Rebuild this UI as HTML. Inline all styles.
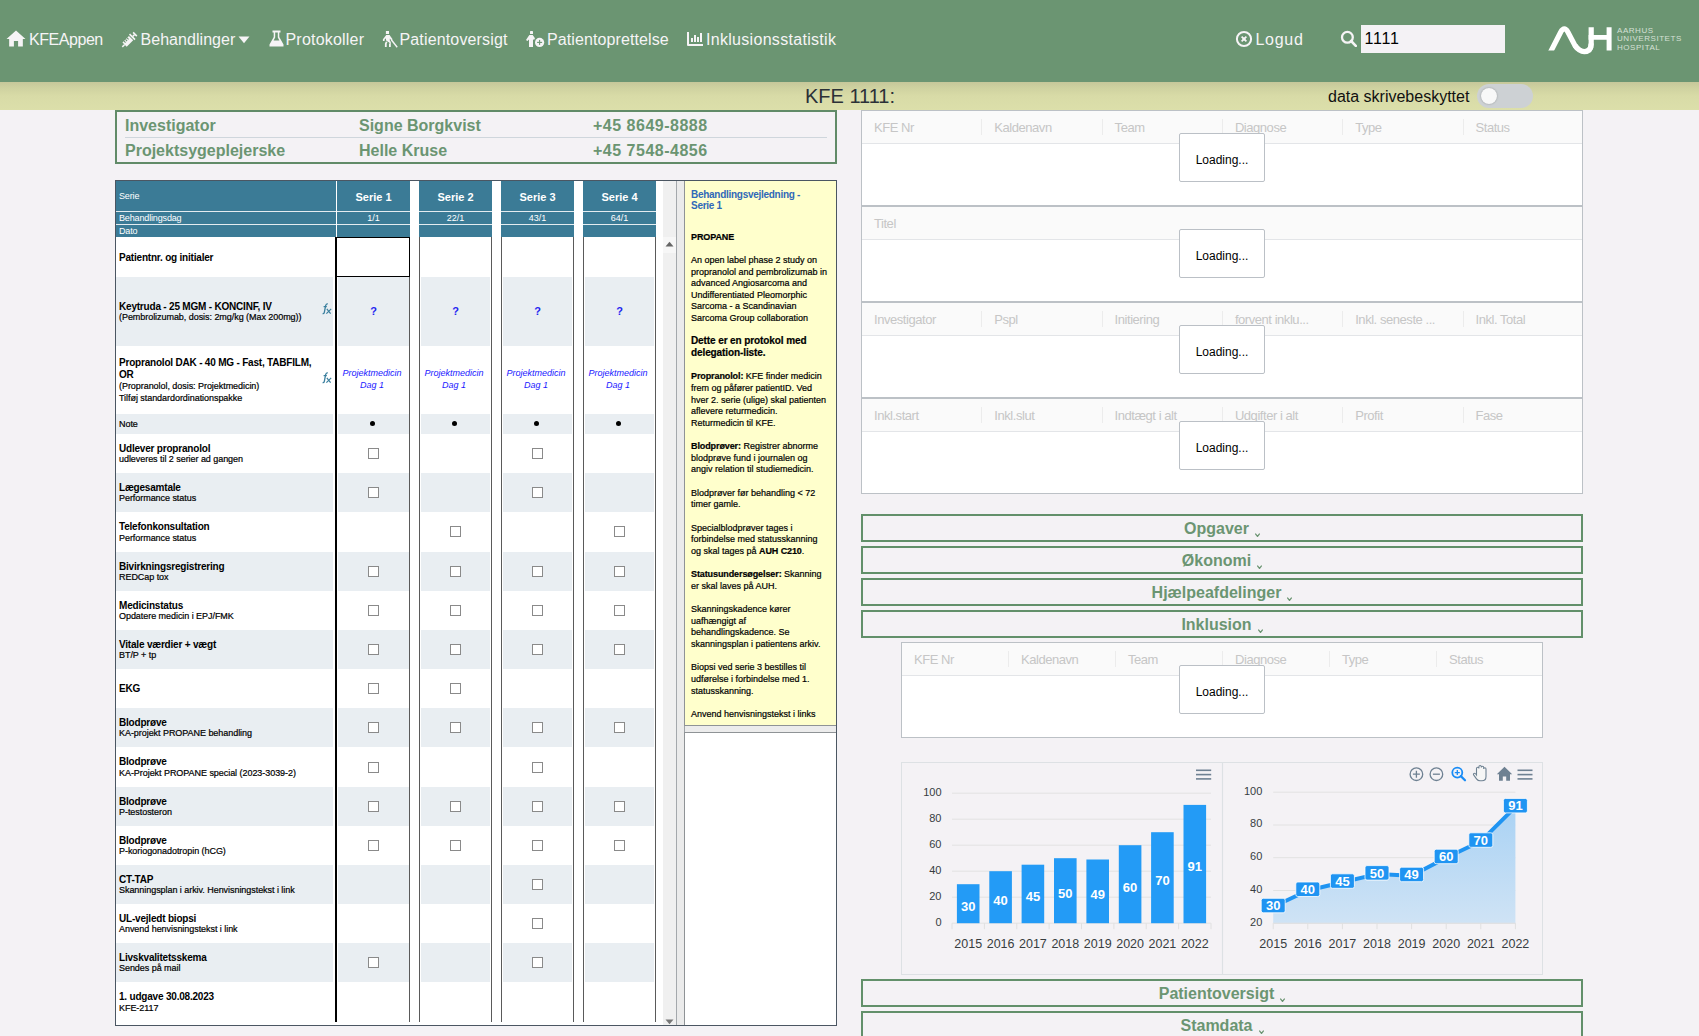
<!DOCTYPE html>
<html><head><meta charset="utf-8">
<style>
*{box-sizing:border-box;}
html,body{margin:0;padding:0;}
body{width:1699px;height:1036px;overflow:hidden;background:#f4f2f5;position:relative;font-family:"Liberation Sans",sans-serif;}
.a{position:absolute;}
.nt{position:absolute;top:30px;font-size:16px;line-height:20px;color:#f6f4f6;white-space:nowrap;}
.ico{position:absolute;fill:#f6f4f6;}
#nav{position:absolute;left:0;top:0;width:1699px;height:82px;background:#6b9572;}
#band{position:absolute;left:0;top:82px;width:1699px;height:28px;background:linear-gradient(#c6c79a 0px,#cfd2a0 6px,#d8dba7 14px,#dcdfaa 28px);}
.inf{position:absolute;font-size:16px;font-weight:bold;color:#6b9572;white-space:nowrap;line-height:20px;}
.hl{position:absolute;font-size:9px;line-height:11px;color:#fff;white-space:nowrap;letter-spacing:-0.15px;}
.hs{position:absolute;width:73px;text-align:center;font-size:11px;font-weight:bold;line-height:14px;color:#fff;white-space:nowrap;}
.hd{position:absolute;width:73px;text-align:center;font-size:9px;line-height:11px;color:#fff;white-space:nowrap;}
.sh{background:#e9eef2;}
.lab{position:absolute;left:119px;width:200px;display:flex;align-items:center;padding-top:1.6px;}
.lt{font-size:10px;font-weight:bold;line-height:11.7px;color:#000;white-space:nowrap;letter-spacing:-0.2px;}
.ls{font-size:9px;line-height:11.7px;color:#000;white-space:nowrap;letter-spacing:-0.05px;-webkit-text-stroke:0.2px #000;}
.cb{position:absolute;width:11px;height:11px;border:1px solid #8a8a8a;background:#fff;}
.vl{top:237px;width:1px;height:785px;background:#5a5a5a;}
.q{position:absolute;width:73px;text-align:center;font-size:11px;font-weight:bold;color:#2424f0;}
.pm{position:absolute;width:70px;display:flex;align-items:center;justify-content:center;text-align:center;font-size:9px;font-style:italic;line-height:11.6px;color:#1a1aff;white-space:nowrap;}
.yt{position:absolute;font-size:10px;font-weight:bold;line-height:11.5px;color:#2f68b8;white-space:nowrap;letter-spacing:-0.28px;}
.yb{position:absolute;font-size:9px;line-height:11.64px;color:#000;white-space:nowrap;-webkit-text-stroke:0.2px #000;}
.yb b{font-size:9px;letter-spacing:-0.1px;}
.yb b.big{font-size:10px;line-height:10px;letter-spacing:-0.1px;}
.gh{position:absolute;font-size:13px;line-height:16px;color:#c6c6c6;white-space:nowrap;letter-spacing:-0.45px;}
.ld{position:absolute;left:1179px;width:86px;height:49px;border:1px solid #bbc0c6;border-radius:2px;background:#fff;font-size:12px;line-height:52px;text-align:center;color:#000;}
.acc{position:absolute;left:861px;width:722px;height:28px;border:2px solid #62906a;text-align:center;color:#6b9572;font-size:16px;font-weight:bold;line-height:26px;white-space:nowrap;}
.acc svg{margin-left:6px;vertical-align:-3px;}
.cy{font-size:11px;fill:#373d3f;font-family:"Liberation Sans",sans-serif;}
.cx{font-size:12.5px;fill:#373d3f;font-family:"Liberation Sans",sans-serif;}
.dl{font-size:13px;font-weight:bold;fill:#fff;font-family:"Liberation Sans",sans-serif;}
</style></head><body>
<div id="nav">
  <!-- home -->
  <svg class="ico" style="left:6px;top:30px" width="20" height="17" viewBox="0 0 19 17" preserveAspectRatio="none"><path d="M9.5 0.5 L18.5 9 L16 9 L16 16.5 L11.5 16.5 L11.5 11 L7.5 11 L7.5 16.5 L3 16.5 L3 9 L0.5 9 Z"/></svg>
  <span class="nt" style="left:29px;letter-spacing:-0.45px">KFEAppen</span>
  <!-- syringe -->
  <svg class="ico" style="left:115px;top:25px" width="30" height="27" viewBox="0 0 30 27"><g transform="translate(7.3,21.9) rotate(45)"><rect x="-0.75" y="-3.4" width="1.5" height="3.4"/><rect x="-3" y="-12.4" width="6" height="9.2"/><rect x="-3.9" y="-14.9" width="7.8" height="1.6"/><rect x="-0.8" y="-17.2" width="1.6" height="2.5"/><rect x="-2.6" y="-18.7" width="5.2" height="1.6"/><rect x="-3.1" y="-10.3" width="2.3" height="1.1" fill="#6b9572"/><rect x="-3.1" y="-8.1" width="2.3" height="1.1" fill="#6b9572"/><rect x="-3.1" y="-5.9" width="2.3" height="1.1" fill="#6b9572"/></g></svg>
  <span class="nt" style="left:140.5px;letter-spacing:0.05px">Behandlinger</span>
  <svg class="ico" style="left:238px;top:36px" width="12" height="8" viewBox="0 0 12 8"><path d="M0.5 0.5 L11.5 0.5 L6 7.2 Z"/></svg>
  <!-- flask -->
  <svg class="ico" style="left:269px;top:30px" width="15" height="17" viewBox="0 0 15 17"><path d="M3.5 0.5 L11.5 0.5 L11.5 2.5 L10.3 2.5 L10.3 7 L14.5 14.5 L14.5 16.5 L0.5 16.5 L0.5 14.5 L4.7 7 L4.7 2.5 L3.5 2.5 Z M6.2 2.5 L6.2 7.5 L4.6 10.5 L10.4 10.5 L8.8 7.5 L8.8 2.5 Z"/></svg>
  <span class="nt" style="left:285.5px;letter-spacing:0.2px">Protokoller</span>
  <!-- person cane -->
  <svg class="ico" style="left:378px;top:27px" width="24" height="23" viewBox="0 0 24 23"><rect x="7.9" y="4" width="3.1" height="3"/><path d="M8.2 8 L11.6 8 L12.6 9.4 L14.6 12.3 L13.4 13.6 L11.8 11.5 L11.8 13.6 L12.8 15 L12.8 20 L11 20 L11 16.2 L9.6 14.9 L8.7 16.7 L8.7 20 L6.9 20 L6.9 16.6 L8 14.2 L8 11.2 L6.6 12.6 L6.6 14 L4.9 14 L4.9 12.2 L6.3 10.6 Z"/><path d="M13.3 12.8 L19.2 20.3" stroke="#f6f4f6" stroke-width="1.4"/><path d="M7.6 13.6 L11.6 16.3" stroke="#6b9572" stroke-width="0.9"/></svg>
  <span class="nt" style="left:399.5px;letter-spacing:0.15px">Patientoversigt</span>
  <!-- person plus -->
  <svg class="ico" style="left:522px;top:27px" width="28" height="23" viewBox="0 0 28 23"><rect x="8" y="4" width="3" height="3" rx="0.6"/><path d="M7.4 8 L10.7 8 L12.8 11 L12.8 12.2 L11 12.8 L11 20 L7 20 L7 12.6 L5.4 14 L4 13 L5.8 10.2 Z"/><circle cx="17.6" cy="15.4" r="5.4" fill="#6b9572"/><circle cx="17.6" cy="15.4" r="4.6"/><rect x="15.1" y="14.85" width="5" height="1.1" fill="#6b9572"/><rect x="17.05" y="12.9" width="1.1" height="5" fill="#6b9572"/></svg>
  <span class="nt" style="left:547px;letter-spacing:0.1px">Patientoprettelse</span>
  <!-- chart -->
  <svg class="ico" style="left:683px;top:28px" width="25" height="22" viewBox="0 0 25 22"><rect x="4" y="4" width="2" height="13.5"/><rect x="4.5" y="16" width="15.5" height="2"/><rect x="8" y="10" width="2" height="4"/><rect x="11" y="7" width="2" height="7"/><rect x="14" y="9" width="2" height="5"/><rect x="17" y="5" width="2" height="9"/></svg>
  <span class="nt" style="left:706px;letter-spacing:0.3px">Inklusionsstatistik</span>
  <!-- logud -->
  <svg class="ico" style="left:1235px;top:30px" width="18" height="18" viewBox="0 0 18 18"><circle cx="9" cy="9" r="7.1" fill="none" stroke="#f6f4f6" stroke-width="2"/><path d="M6 7.2 L7.2 6 L9 7.8 L10.8 6 L12 7.2 L10.2 9 L12 10.8 L10.8 12 L9 10.2 L7.2 12 L6 10.8 L7.8 9 Z"/><rect x="7.6" y="7.6" width="2.8" height="2.8"/></svg>
  <span class="nt" style="left:1255.5px;letter-spacing:0.7px">Logud</span>
  <!-- search -->
  <svg class="ico" style="left:1340px;top:30px" width="17" height="17" viewBox="0 0 17 17"><circle cx="7.4" cy="7.3" r="5.4" fill="none" stroke="#f6f4f6" stroke-width="2.3"/><path d="M11.1 11 L15.8 15.8" stroke="#f6f4f6" stroke-width="2.6" stroke-linecap="round"/></svg>
  <div class="a" style="left:1361px;top:25px;width:144px;height:28px;background:#f4f2f5;"></div>
  <span class="a" style="left:1364.5px;top:29px;font-size:16px;line-height:20px;color:#000;letter-spacing:0.75px;">1111</span>
  <!-- logo -->
  <svg class="a" style="left:1540px;top:15px" width="80" height="45" viewBox="0 0 80 45"><defs><clipPath id="lc"><rect x="0" y="0" width="80" height="35.6"/></clipPath></defs><path clip-path="url(#lc)" d="M9.5 39 L20.6 17.2 Q24.3 10.6 28 17.2 L34.8 30.2 Q39.2 36.6 44.2 36.6 Q51.2 36.6 51.2 28.5 L51.2 12.2" fill="none" stroke="#ffffff" stroke-width="5.2"/><path d="M34.8 30.2 Q39.2 36.6 44.2 36.6 Q51.2 36.6 51.2 28.5" fill="none" stroke="#ffffff" stroke-width="5.2"/><path d="M48.6 20.1 L67 20.1 L67 24.8 L48.6 24.8 Z M66.6 12.2 L71.6 12.2 L71.6 35.5 L66.6 35.5 Z" fill="#ffffff"/></svg>
  <div class="a" style="left:1617px;top:26.5px;font-size:8px;line-height:8.85px;color:#d6e0d6;letter-spacing:0.55px;white-space:nowrap;">AARHUS<br>UNIVERSITETS<br>HOSPITAL</div>
</div>
<div id="band">
  <span class="a" style="left:805px;top:2.5px;font-size:20px;line-height:22px;color:#2b3037;">KFE 1111:</span>
  <span class="a" style="left:1328px;top:5px;font-size:16px;line-height:20px;color:#111;">data skrivebeskyttet</span>
  <div class="a" style="left:1477px;top:2px;width:56px;height:24px;border-radius:12px;background:#cdd1d4;"></div>
  <div class="a" style="left:1481px;top:6px;width:16px;height:16px;border-radius:8px;background:#f8f8f8;box-shadow:0 0 2px rgba(0,0,0,.3);"></div>
</div>
<!-- info box -->
<div class="a" style="left:115px;top:110px;width:722px;height:54px;border:2px solid #618b68;background:#f4f2f5;">
  <div class="a" style="left:8px;top:25px;width:702px;height:1px;background:#cfd6dc;"></div>
  <span class="inf" style="left:8px;top:4px">Investigator</span>
  <span class="inf" style="left:242px;top:4px">Signe Borgkvist</span>
  <span class="inf" style="left:476px;top:4px;letter-spacing:0.5px">+45 8649-8888</span>
  <span class="inf" style="left:8px;top:29px">Projektsygeplejerske</span>
  <span class="inf" style="left:242px;top:29px">Helle Kruse</span>
  <span class="inf" style="left:476px;top:29px;letter-spacing:0.5px">+45 7548-4856</span>
</div>
<div class="a" style="left:115px;top:180px;width:722px;height:846px;border:1px solid #4b5662;background:#fff;"></div>
<div class="a" style="left:116px;top:181px;width:220px;height:56px;background:#3b7b96;"></div>
<div class="a" style="left:337px;top:181px;width:73px;height:56px;background:#3b7b96;"></div>
<div class="a" style="left:419px;top:181px;width:73px;height:56px;background:#3b7b96;"></div>
<div class="a" style="left:501px;top:181px;width:73px;height:56px;background:#3b7b96;"></div>
<div class="a" style="left:583px;top:181px;width:73px;height:56px;background:#3b7b96;"></div>
<div class="a" style="left:116px;top:211px;width:220px;height:1px;background:#e4ecf0;"></div>
<div class="a" style="left:337px;top:211px;width:73px;height:1px;background:#e4ecf0;"></div>
<div class="a" style="left:419px;top:211px;width:73px;height:1px;background:#e4ecf0;"></div>
<div class="a" style="left:501px;top:211px;width:73px;height:1px;background:#e4ecf0;"></div>
<div class="a" style="left:583px;top:211px;width:73px;height:1px;background:#e4ecf0;"></div>
<div class="a" style="left:116px;top:224px;width:220px;height:1px;background:#e4ecf0;"></div>
<div class="a" style="left:337px;top:224px;width:73px;height:1px;background:#e4ecf0;"></div>
<div class="a" style="left:419px;top:224px;width:73px;height:1px;background:#e4ecf0;"></div>
<div class="a" style="left:501px;top:224px;width:73px;height:1px;background:#e4ecf0;"></div>
<div class="a" style="left:583px;top:224px;width:73px;height:1px;background:#e4ecf0;"></div>
<span class="hl" style="left:119px;top:191px">Serie</span>
<span class="hl" style="left:119px;top:213px">Behandlingsdag</span>
<span class="hl" style="left:119px;top:226px">Dato</span>
<span class="hs" style="left:337px;top:190px">Serie 1</span>
<span class="hd" style="left:337px;top:213px">1/1</span>
<span class="hs" style="left:419px;top:190px">Serie 2</span>
<span class="hd" style="left:419px;top:213px">22/1</span>
<span class="hs" style="left:501px;top:190px">Serie 3</span>
<span class="hd" style="left:501px;top:213px">43/1</span>
<span class="hs" style="left:583px;top:190px">Serie 4</span>
<span class="hd" style="left:583px;top:213px">64/1</span>
<div class="lab" style="top:237px;height:40px"><div><div class="lt">Patientnr. og initialer</div></div></div>
<div class="a sh" style="left:116px;top:277px;width:217px;height:69px"></div>
<div class="a sh" style="left:338px;top:277px;width:71px;height:69px"></div>
<div class="a sh" style="left:421px;top:277px;width:69px;height:69px"></div>
<div class="a sh" style="left:503px;top:277px;width:69px;height:69px"></div>
<div class="a sh" style="left:585px;top:277px;width:69px;height:69px"></div>
<div class="lab" style="top:277px;height:69px"><div><div class="lt">Keytruda - 25 MGM - KONCINF, IV</div><div class="ls">(Pembrolizumab, dosis: 2mg/kg (Max 200mg))</div></div></div>
<span class="q" style="left:337px;top:277px;height:69px;line-height:69px">?</span>
<span class="q" style="left:419px;top:277px;height:69px;line-height:69px">?</span>
<span class="q" style="left:501px;top:277px;height:69px;line-height:69px">?</span>
<span class="q" style="left:583px;top:277px;height:69px;line-height:69px">?</span>
<svg class="a fx" style="left:322px;top:303px" width="10" height="12" viewBox="0 0 10 12"><path d="M5.8 0.9 Q4.3 0.6 3.6 2.6 L2.4 9.2 Q1.9 10.9 0.6 10.6" fill="none" stroke="#3a7f9e" stroke-width="1.3"/><path d="M1.6 3.6 L4.8 3.6" stroke="#3a7f9e" stroke-width="1.2"/><path d="M4.8 5.9 L8.6 10.6 M9.2 5.9 L4.4 10.6" stroke="#3a7f9e" stroke-width="1.2"/></svg>
<div class="lab" style="top:346px;height:68px"><div><div class="lt">Propranolol DAK - 40 MG - Fast, TABFILM,<br>OR</div><div class="ls">(Propranolol, dosis: Projektmedicin)</div><div class="ls">Tilføj standardordinationspakke</div></div></div>
<div class="pm" style="left:337px;top:346px;height:68px"><div>Projektmedicin<br>Dag 1</div></div>
<div class="pm" style="left:419px;top:346px;height:68px"><div>Projektmedicin<br>Dag 1</div></div>
<div class="pm" style="left:501px;top:346px;height:68px"><div>Projektmedicin<br>Dag 1</div></div>
<div class="pm" style="left:583px;top:346px;height:68px"><div>Projektmedicin<br>Dag 1</div></div>
<svg class="a fx" style="left:322px;top:372px" width="10" height="12" viewBox="0 0 10 12"><path d="M5.8 0.9 Q4.3 0.6 3.6 2.6 L2.4 9.2 Q1.9 10.9 0.6 10.6" fill="none" stroke="#3a7f9e" stroke-width="1.3"/><path d="M1.6 3.6 L4.8 3.6" stroke="#3a7f9e" stroke-width="1.2"/><path d="M4.8 5.9 L8.6 10.6 M9.2 5.9 L4.4 10.6" stroke="#3a7f9e" stroke-width="1.2"/></svg>
<div class="a sh" style="left:116px;top:414px;width:217px;height:20px"></div>
<div class="a sh" style="left:338px;top:414px;width:71px;height:20px"></div>
<div class="a sh" style="left:421px;top:414px;width:69px;height:20px"></div>
<div class="a sh" style="left:503px;top:414px;width:69px;height:20px"></div>
<div class="a sh" style="left:585px;top:414px;width:69px;height:20px"></div>
<div class="lab" style="top:414px;height:20px"><div><div class="ls">Note</div></div></div>
<div class="a" style="left:370px;top:421px;width:5px;height:5px;border-radius:3px;background:#000"></div>
<div class="a" style="left:452px;top:421px;width:5px;height:5px;border-radius:3px;background:#000"></div>
<div class="a" style="left:534px;top:421px;width:5px;height:5px;border-radius:3px;background:#000"></div>
<div class="a" style="left:616px;top:421px;width:5px;height:5px;border-radius:3px;background:#000"></div>
<div class="lab" style="top:434px;height:39px"><div><div class="lt">Udlever propranolol</div><div class="ls">udleveres til 2 serier ad gangen</div></div></div>
<div class="cb" style="left:368px;top:448px"></div>
<div class="cb" style="left:532px;top:448px"></div>
<div class="a sh" style="left:116px;top:473px;width:217px;height:39px"></div>
<div class="a sh" style="left:338px;top:473px;width:71px;height:39px"></div>
<div class="a sh" style="left:421px;top:473px;width:69px;height:39px"></div>
<div class="a sh" style="left:503px;top:473px;width:69px;height:39px"></div>
<div class="a sh" style="left:585px;top:473px;width:69px;height:39px"></div>
<div class="lab" style="top:473px;height:39px"><div><div class="lt">Lægesamtale</div><div class="ls">Performance status</div></div></div>
<div class="cb" style="left:368px;top:487px"></div>
<div class="cb" style="left:532px;top:487px"></div>
<div class="lab" style="top:512px;height:40px"><div><div class="lt">Telefonkonsultation</div><div class="ls">Performance status</div></div></div>
<div class="cb" style="left:450px;top:526px"></div>
<div class="cb" style="left:614px;top:526px"></div>
<div class="a sh" style="left:116px;top:552px;width:217px;height:39px"></div>
<div class="a sh" style="left:338px;top:552px;width:71px;height:39px"></div>
<div class="a sh" style="left:421px;top:552px;width:69px;height:39px"></div>
<div class="a sh" style="left:503px;top:552px;width:69px;height:39px"></div>
<div class="a sh" style="left:585px;top:552px;width:69px;height:39px"></div>
<div class="lab" style="top:552px;height:39px"><div><div class="lt">Bivirkningsregistrering</div><div class="ls">REDCap tox</div></div></div>
<div class="cb" style="left:368px;top:566px"></div>
<div class="cb" style="left:450px;top:566px"></div>
<div class="cb" style="left:532px;top:566px"></div>
<div class="cb" style="left:614px;top:566px"></div>
<div class="lab" style="top:591px;height:39px"><div><div class="lt">Medicinstatus</div><div class="ls">Opdatere medicin i EPJ/FMK</div></div></div>
<div class="cb" style="left:368px;top:605px"></div>
<div class="cb" style="left:450px;top:605px"></div>
<div class="cb" style="left:532px;top:605px"></div>
<div class="cb" style="left:614px;top:605px"></div>
<div class="a sh" style="left:116px;top:630px;width:217px;height:39px"></div>
<div class="a sh" style="left:338px;top:630px;width:71px;height:39px"></div>
<div class="a sh" style="left:421px;top:630px;width:69px;height:39px"></div>
<div class="a sh" style="left:503px;top:630px;width:69px;height:39px"></div>
<div class="a sh" style="left:585px;top:630px;width:69px;height:39px"></div>
<div class="lab" style="top:630px;height:39px"><div><div class="lt">Vitale værdier + vægt</div><div class="ls">BT/P + tp</div></div></div>
<div class="cb" style="left:368px;top:644px"></div>
<div class="cb" style="left:450px;top:644px"></div>
<div class="cb" style="left:532px;top:644px"></div>
<div class="cb" style="left:614px;top:644px"></div>
<div class="lab" style="top:669px;height:39px"><div><div class="lt">EKG</div></div></div>
<div class="cb" style="left:368px;top:683px"></div>
<div class="cb" style="left:450px;top:683px"></div>
<div class="a sh" style="left:116px;top:708px;width:217px;height:39px"></div>
<div class="a sh" style="left:338px;top:708px;width:71px;height:39px"></div>
<div class="a sh" style="left:421px;top:708px;width:69px;height:39px"></div>
<div class="a sh" style="left:503px;top:708px;width:69px;height:39px"></div>
<div class="a sh" style="left:585px;top:708px;width:69px;height:39px"></div>
<div class="lab" style="top:708px;height:39px"><div><div class="lt">Blodprøve</div><div class="ls">KA-projekt PROPANE behandling</div></div></div>
<div class="cb" style="left:368px;top:722px"></div>
<div class="cb" style="left:450px;top:722px"></div>
<div class="cb" style="left:532px;top:722px"></div>
<div class="cb" style="left:614px;top:722px"></div>
<div class="lab" style="top:747px;height:40px"><div><div class="lt">Blodprøve</div><div class="ls">KA-Projekt PROPANE special (2023-3039-2)</div></div></div>
<div class="cb" style="left:368px;top:762px"></div>
<div class="cb" style="left:532px;top:762px"></div>
<div class="a sh" style="left:116px;top:787px;width:217px;height:39px"></div>
<div class="a sh" style="left:338px;top:787px;width:71px;height:39px"></div>
<div class="a sh" style="left:421px;top:787px;width:69px;height:39px"></div>
<div class="a sh" style="left:503px;top:787px;width:69px;height:39px"></div>
<div class="a sh" style="left:585px;top:787px;width:69px;height:39px"></div>
<div class="lab" style="top:787px;height:39px"><div><div class="lt">Blodprøve</div><div class="ls">P-testosteron</div></div></div>
<div class="cb" style="left:368px;top:801px"></div>
<div class="cb" style="left:450px;top:801px"></div>
<div class="cb" style="left:532px;top:801px"></div>
<div class="cb" style="left:614px;top:801px"></div>
<div class="lab" style="top:826px;height:39px"><div><div class="lt">Blodprøve</div><div class="ls">P-koriogonadotropin (hCG)</div></div></div>
<div class="cb" style="left:368px;top:840px"></div>
<div class="cb" style="left:450px;top:840px"></div>
<div class="cb" style="left:532px;top:840px"></div>
<div class="cb" style="left:614px;top:840px"></div>
<div class="a sh" style="left:116px;top:865px;width:217px;height:39px"></div>
<div class="a sh" style="left:338px;top:865px;width:71px;height:39px"></div>
<div class="a sh" style="left:421px;top:865px;width:69px;height:39px"></div>
<div class="a sh" style="left:503px;top:865px;width:69px;height:39px"></div>
<div class="a sh" style="left:585px;top:865px;width:69px;height:39px"></div>
<div class="lab" style="top:865px;height:39px"><div><div class="lt">CT-TAP</div><div class="ls">Skanningsplan i arkiv. Henvisningstekst i link</div></div></div>
<div class="cb" style="left:532px;top:879px"></div>
<div class="lab" style="top:904px;height:39px"><div><div class="lt">UL-vejledt biopsi</div><div class="ls">Anvend henvisningstekst i link</div></div></div>
<div class="cb" style="left:532px;top:918px"></div>
<div class="a sh" style="left:116px;top:943px;width:217px;height:39px"></div>
<div class="a sh" style="left:338px;top:943px;width:71px;height:39px"></div>
<div class="a sh" style="left:421px;top:943px;width:69px;height:39px"></div>
<div class="a sh" style="left:503px;top:943px;width:69px;height:39px"></div>
<div class="a sh" style="left:585px;top:943px;width:69px;height:39px"></div>
<div class="lab" style="top:943px;height:39px"><div><div class="lt">Livskvalitetsskema</div><div class="ls">Sendes på mail</div></div></div>
<div class="cb" style="left:368px;top:957px"></div>
<div class="cb" style="left:532px;top:957px"></div>
<div class="lab" style="top:982px;height:40px"><div><div class="lt">1. udgave 30.08.2023</div><div class="ls">KFE-2117</div></div></div>
<div class="a" style="left:335px;top:237px;width:2px;height:785px;background:#000"></div>
<div class="a vl" style="left:409px"></div>
<div class="a vl" style="left:419px"></div>
<div class="a vl" style="left:491px"></div>
<div class="a vl" style="left:501px"></div>
<div class="a vl" style="left:573px"></div>
<div class="a vl" style="left:583px"></div>
<div class="a vl" style="left:655px"></div>
<div class="a" style="left:336px;top:237px;width:74px;height:40px;border:1px solid #000;border-left:none;"></div>
<div class="a" style="left:663px;top:181px;width:13px;height:844px;background:#f0f0f0;"></div>
<div class="a" style="left:663px;top:237px;width:13px;height:16px;background:#f7f7f7;"></div>
<svg class="a" style="left:665px;top:241px" width="9" height="6" viewBox="0 0 9 6"><path d="M0.5 5.5 L4.5 0.8 L8.5 5.5 Z" fill="#666"/></svg>
<svg class="a" style="left:665px;top:1019px" width="9" height="6" viewBox="0 0 9 6"><path d="M0.5 0.5 L4.5 5.2 L8.5 0.5 Z" fill="#777"/></svg>
<div class="a" style="left:676px;top:181px;width:1px;height:844px;background:#a4a8ac;"></div>
<div class="a" style="left:677px;top:181px;width:7px;height:844px;background:#ebebeb;"></div>
<div class="a" style="left:684px;top:181px;width:1px;height:844px;background:#9da2a6;"></div>
<div class="a" style="left:684px;top:181px;width:152px;height:545px;background:#ffffcc;border-left:1px solid #8f9396;border-bottom:1px solid #8f9396;"></div>
<div class="yt" style="left:691px;top:188.5px">Behandlingsvejledning -<br>Serie 1</div>
<div class="yb" style="left:691px;top:231.6px"><b>PROPANE</b><br><br>An open label phase 2 study on<br>propranolol and pembrolizumab in<br>advanced Angiosarcoma and<br>Undifferentiated Pleomorphic<br>Sarcoma - a Scandinavian<br>Sarcoma Group collaboration<br><br><b class="big">Dette er en protokol med<br>delegation-liste.</b><br><br><b>Propranolol:</b> KFE finder medicin<br>frem og påfører patientID. Ved<br>hver 2. serie (ulige) skal patienten<br>aflevere returmedicin.<br>Returmedicin til KFE.<br><br><b>Blodprøver:</b> Registrer abnorme<br>blodprøve fund i journalen og<br>angiv relation til studiemedicin.<br><br>Blodprøver før behandling &lt; 72<br>timer gamle.<br><br>Specialblodprøver tages i<br>forbindelse med statusskanning<br>og skal tages på <b>AUH C210</b>.<br><br><b>Statusundersøgelser:</b> Skanning<br>er skal laves på AUH.<br><br>Skanningskadence kører<br>uafhængigt af<br>behandlingskadence. Se<br>skanningsplan i patientens arkiv.<br><br>Biopsi ved serie 3 bestilles til<br>udførelse i forbindelse med 1.<br>statusskanning.<br><br>Anvend henvisningstekst i links</div>
<div class="a" style="left:685px;top:726px;width:151px;height:6px;background:#ececec;"></div>
<div class="a" style="left:684px;top:732px;width:152px;height:293px;background:#fff;border-left:1px solid #8f9396;border-top:1px solid #8f9396;"></div>

<div class="a" style="left:861px;top:110px;width:722px;height:96px;border:1px solid #bcc1c6;background:#fff;"></div>
<div class="a" style="left:862px;top:111px;width:720px;height:33px;background:#fafafa;border-bottom:1px solid #e3e5e8;"></div>
<span class="gh" style="left:874.0px;top:120px">KFE Nr</span>
<span class="gh" style="left:994.3px;top:120px">Kaldenavn</span>
<div class="a" style="left:981.3px;top:119px;width:1px;height:16px;background:#ececec;"></div>
<span class="gh" style="left:1114.6px;top:120px">Team</span>
<div class="a" style="left:1101.6px;top:119px;width:1px;height:16px;background:#ececec;"></div>
<span class="gh" style="left:1234.9px;top:120px">Diagnose</span>
<div class="a" style="left:1221.9px;top:119px;width:1px;height:16px;background:#ececec;"></div>
<span class="gh" style="left:1355.2px;top:120px">Type</span>
<div class="a" style="left:1342.2px;top:119px;width:1px;height:16px;background:#ececec;"></div>
<span class="gh" style="left:1475.5px;top:120px">Status</span>
<div class="a" style="left:1462.5px;top:119px;width:1px;height:16px;background:#ececec;"></div>
<div class="ld" style="top:133px">Loading...</div>
<div class="a" style="left:861px;top:206px;width:722px;height:96px;border:1px solid #bcc1c6;background:#fff;"></div>
<div class="a" style="left:862px;top:207px;width:720px;height:33px;background:#fafafa;border-bottom:1px solid #e3e5e8;"></div>
<span class="gh" style="left:874.0px;top:216px">Titel</span>
<div class="ld" style="top:229px">Loading...</div>
<div class="a" style="left:861px;top:302px;width:722px;height:96px;border:1px solid #bcc1c6;background:#fff;"></div>
<div class="a" style="left:862px;top:303px;width:720px;height:33px;background:#fafafa;border-bottom:1px solid #e3e5e8;"></div>
<span class="gh" style="left:874.0px;top:312px">Investigator</span>
<span class="gh" style="left:994.3px;top:312px">Pspl</span>
<div class="a" style="left:981.3px;top:311px;width:1px;height:16px;background:#ececec;"></div>
<span class="gh" style="left:1114.6px;top:312px">Initiering</span>
<div class="a" style="left:1101.6px;top:311px;width:1px;height:16px;background:#ececec;"></div>
<span class="gh" style="left:1234.9px;top:312px">forvent inklu...</span>
<div class="a" style="left:1221.9px;top:311px;width:1px;height:16px;background:#ececec;"></div>
<span class="gh" style="left:1355.2px;top:312px">Inkl. seneste ...</span>
<div class="a" style="left:1342.2px;top:311px;width:1px;height:16px;background:#ececec;"></div>
<span class="gh" style="left:1475.5px;top:312px">Inkl. Total</span>
<div class="a" style="left:1462.5px;top:311px;width:1px;height:16px;background:#ececec;"></div>
<div class="ld" style="top:325px">Loading...</div>
<div class="a" style="left:861px;top:398px;width:722px;height:96px;border:1px solid #bcc1c6;background:#fff;"></div>
<div class="a" style="left:862px;top:399px;width:720px;height:33px;background:#fafafa;border-bottom:1px solid #e3e5e8;"></div>
<span class="gh" style="left:874.0px;top:408px">Inkl.start</span>
<span class="gh" style="left:994.3px;top:408px">Inkl.slut</span>
<div class="a" style="left:981.3px;top:407px;width:1px;height:16px;background:#ececec;"></div>
<span class="gh" style="left:1114.6px;top:408px">Indtægt i alt</span>
<div class="a" style="left:1101.6px;top:407px;width:1px;height:16px;background:#ececec;"></div>
<span class="gh" style="left:1234.9px;top:408px">Udgifter i alt</span>
<div class="a" style="left:1221.9px;top:407px;width:1px;height:16px;background:#ececec;"></div>
<span class="gh" style="left:1355.2px;top:408px">Profit</span>
<div class="a" style="left:1342.2px;top:407px;width:1px;height:16px;background:#ececec;"></div>
<span class="gh" style="left:1475.5px;top:408px">Fase</span>
<div class="a" style="left:1462.5px;top:407px;width:1px;height:16px;background:#ececec;"></div>
<div class="ld" style="top:421px">Loading...</div>
<div class="acc" style="top:514px"><span>Opgaver</span><svg width="5" height="4" viewBox="0 0 5 4"><path d="M0.3 0.6 L2.5 3.4 L4.7 0.6" fill="none" stroke="#6b9572" stroke-width="1.3"/></svg></div>
<div class="acc" style="top:546px"><span>Økonomi</span><svg width="5" height="4" viewBox="0 0 5 4"><path d="M0.3 0.6 L2.5 3.4 L4.7 0.6" fill="none" stroke="#6b9572" stroke-width="1.3"/></svg></div>
<div class="acc" style="top:578px"><span>Hjælpeafdelinger</span><svg width="5" height="4" viewBox="0 0 5 4"><path d="M0.3 0.6 L2.5 3.4 L4.7 0.6" fill="none" stroke="#6b9572" stroke-width="1.3"/></svg></div>
<div class="acc" style="top:610px"><span>Inklusion</span><svg width="5" height="4" viewBox="0 0 5 4"><path d="M0.3 0.6 L2.5 3.4 L4.7 0.6" fill="none" stroke="#6b9572" stroke-width="1.3"/></svg></div>
<div class="acc" style="top:979px"><span>Patientoversigt</span><svg width="5" height="4" viewBox="0 0 5 4"><path d="M0.3 0.6 L2.5 3.4 L4.7 0.6" fill="none" stroke="#6b9572" stroke-width="1.3"/></svg></div>
<div class="acc" style="top:1011px"><span>Stamdata</span><svg width="5" height="4" viewBox="0 0 5 4"><path d="M0.3 0.6 L2.5 3.4 L4.7 0.6" fill="none" stroke="#6b9572" stroke-width="1.3"/></svg></div>
<div class="a" style="left:901px;top:642px;width:642px;height:96px;border:1px solid #bcc1c6;background:#fff;"></div>
<div class="a" style="left:902px;top:643px;width:640px;height:33px;background:#fafafa;border-bottom:1px solid #e3e5e8;"></div>
<span class="gh" style="left:914px;top:652px">KFE Nr</span>
<span class="gh" style="left:1021px;top:652px">Kaldenavn</span>
<div class="a" style="left:1008px;top:651px;width:1px;height:16px;background:#ececec;"></div>
<span class="gh" style="left:1128px;top:652px">Team</span>
<div class="a" style="left:1115px;top:651px;width:1px;height:16px;background:#ececec;"></div>
<span class="gh" style="left:1235px;top:652px">Diagnose</span>
<div class="a" style="left:1222px;top:651px;width:1px;height:16px;background:#ececec;"></div>
<span class="gh" style="left:1342px;top:652px">Type</span>
<div class="a" style="left:1329px;top:651px;width:1px;height:16px;background:#ececec;"></div>
<span class="gh" style="left:1449px;top:652px">Status</span>
<div class="a" style="left:1436px;top:651px;width:1px;height:16px;background:#ececec;"></div>
<div class="ld" style="top:665px">Loading...</div>
<svg class="a" style="left:0;top:0" width="1699" height="1036" viewBox="0 0 1699 1036">
<rect x="901.5" y="762.5" width="641" height="212" fill="none" stroke="#dde1e4" stroke-width="1"/>
<line x1="1222.5" y1="762.5" x2="1222.5" y2="974.5" stroke="#dde1e4" stroke-width="1.2"/>
<line x1="952" y1="923.2" x2="1211" y2="923.2" stroke="#e2e2e2" stroke-width="1"/>
<text x="941.5" y="926.0" text-anchor="end" class="cy">0</text>
<line x1="952" y1="897.2" x2="1211" y2="897.2" stroke="#e2e2e2" stroke-width="1"/>
<text x="941.5" y="900.0" text-anchor="end" class="cy">20</text>
<line x1="952" y1="871.2" x2="1211" y2="871.2" stroke="#e2e2e2" stroke-width="1"/>
<text x="941.5" y="874.0" text-anchor="end" class="cy">40</text>
<line x1="952" y1="845.2" x2="1211" y2="845.2" stroke="#e2e2e2" stroke-width="1"/>
<text x="941.5" y="848.0" text-anchor="end" class="cy">60</text>
<line x1="952" y1="819.2" x2="1211" y2="819.2" stroke="#e2e2e2" stroke-width="1"/>
<text x="941.5" y="822.0" text-anchor="end" class="cy">80</text>
<line x1="952" y1="793.2" x2="1211" y2="793.2" stroke="#e2e2e2" stroke-width="1"/>
<text x="941.5" y="796.0" text-anchor="end" class="cy">100</text>
<line x1="952.0" y1="923.2" x2="952.0" y2="929.2" stroke="#e0e0e0" stroke-width="1"/>
<line x1="984.4" y1="923.2" x2="984.4" y2="929.2" stroke="#e0e0e0" stroke-width="1"/>
<line x1="1016.8" y1="923.2" x2="1016.8" y2="929.2" stroke="#e0e0e0" stroke-width="1"/>
<line x1="1049.1" y1="923.2" x2="1049.1" y2="929.2" stroke="#e0e0e0" stroke-width="1"/>
<line x1="1081.5" y1="923.2" x2="1081.5" y2="929.2" stroke="#e0e0e0" stroke-width="1"/>
<line x1="1113.9" y1="923.2" x2="1113.9" y2="929.2" stroke="#e0e0e0" stroke-width="1"/>
<line x1="1146.2" y1="923.2" x2="1146.2" y2="929.2" stroke="#e0e0e0" stroke-width="1"/>
<line x1="1178.6" y1="923.2" x2="1178.6" y2="929.2" stroke="#e0e0e0" stroke-width="1"/>
<line x1="1211.0" y1="923.2" x2="1211.0" y2="929.2" stroke="#e0e0e0" stroke-width="1"/>
<rect x="956.9" y="884.2" width="22.6" height="39.0" fill="#239bf6"/>
<text x="968.2" y="911.0" text-anchor="middle" class="dl">30</text>
<text x="968.2" y="948.3" text-anchor="middle" class="cx">2015</text>
<rect x="989.3" y="871.2" width="22.6" height="52.0" fill="#239bf6"/>
<text x="1000.6" y="904.5" text-anchor="middle" class="dl">40</text>
<text x="1000.6" y="948.3" text-anchor="middle" class="cx">2016</text>
<rect x="1021.6" y="864.7" width="22.6" height="58.5" fill="#239bf6"/>
<text x="1032.9" y="901.2" text-anchor="middle" class="dl">45</text>
<text x="1032.9" y="948.3" text-anchor="middle" class="cx">2017</text>
<rect x="1054.0" y="858.2" width="22.6" height="65.0" fill="#239bf6"/>
<text x="1065.3" y="898.0" text-anchor="middle" class="dl">50</text>
<text x="1065.3" y="948.3" text-anchor="middle" class="cx">2018</text>
<rect x="1086.4" y="859.5" width="22.6" height="63.7" fill="#239bf6"/>
<text x="1097.7" y="898.6" text-anchor="middle" class="dl">49</text>
<text x="1097.7" y="948.3" text-anchor="middle" class="cx">2019</text>
<rect x="1118.8" y="845.2" width="22.6" height="78.0" fill="#239bf6"/>
<text x="1130.1" y="891.5" text-anchor="middle" class="dl">60</text>
<text x="1130.1" y="948.3" text-anchor="middle" class="cx">2020</text>
<rect x="1151.1" y="832.2" width="22.6" height="91.0" fill="#239bf6"/>
<text x="1162.4" y="885.0" text-anchor="middle" class="dl">70</text>
<text x="1162.4" y="948.3" text-anchor="middle" class="cx">2021</text>
<rect x="1183.5" y="804.9" width="22.6" height="118.3" fill="#239bf6"/>
<text x="1194.8" y="871.4" text-anchor="middle" class="dl">91</text>
<text x="1194.8" y="948.3" text-anchor="middle" class="cx">2022</text>
<line x1="1196" y1="770.3" x2="1211.2" y2="770.3" stroke="#6e8192" stroke-width="1.6"/>
<line x1="1196" y1="774.6" x2="1211.2" y2="774.6" stroke="#6e8192" stroke-width="1.6"/>
<line x1="1196" y1="778.9" x2="1211.2" y2="778.9" stroke="#6e8192" stroke-width="1.6"/>
<line x1="1273.2" y1="923.2" x2="1515.4" y2="923.2" stroke="#e2e2e2" stroke-width="1"/>
<text x="1262.3" y="925.5" text-anchor="end" class="cy">20</text>
<line x1="1273.2" y1="890.5" x2="1515.4" y2="890.5" stroke="#e2e2e2" stroke-width="1"/>
<text x="1262.3" y="892.8" text-anchor="end" class="cy">40</text>
<line x1="1273.2" y1="857.7" x2="1515.4" y2="857.7" stroke="#e2e2e2" stroke-width="1"/>
<text x="1262.3" y="860.0" text-anchor="end" class="cy">60</text>
<line x1="1273.2" y1="825.0" x2="1515.4" y2="825.0" stroke="#e2e2e2" stroke-width="1"/>
<text x="1262.3" y="827.2" text-anchor="end" class="cy">80</text>
<line x1="1273.2" y1="792.2" x2="1515.4" y2="792.2" stroke="#e2e2e2" stroke-width="1"/>
<text x="1262.3" y="794.5" text-anchor="end" class="cy">100</text>
<defs><linearGradient id="ag" x1="0" y1="0" x2="0" y2="1"><stop offset="0" stop-color="#a9d2f4"/><stop offset="1" stop-color="#cfe3f5"/></linearGradient></defs>
<path d="M1273.2,923.2 L1273.2,906.8 L1307.8,890.5 L1342.4,882.3 L1377.0,874.1 L1411.6,875.7 L1446.2,857.7 L1480.8,841.3 L1515.4,806.9 L1515.4,923.2 Z" fill="url(#ag)"/>
<line x1="1273.2" y1="923.2" x2="1515.4" y2="923.2" stroke="#e0e0e0" stroke-width="1"/>
<line x1="1273.2" y1="923.2" x2="1273.2" y2="929.2" stroke="#e0e0e0" stroke-width="1"/>
<line x1="1307.8" y1="923.2" x2="1307.8" y2="929.2" stroke="#e0e0e0" stroke-width="1"/>
<line x1="1342.4" y1="923.2" x2="1342.4" y2="929.2" stroke="#e0e0e0" stroke-width="1"/>
<line x1="1377.0" y1="923.2" x2="1377.0" y2="929.2" stroke="#e0e0e0" stroke-width="1"/>
<line x1="1411.6" y1="923.2" x2="1411.6" y2="929.2" stroke="#e0e0e0" stroke-width="1"/>
<line x1="1446.2" y1="923.2" x2="1446.2" y2="929.2" stroke="#e0e0e0" stroke-width="1"/>
<line x1="1480.8" y1="923.2" x2="1480.8" y2="929.2" stroke="#e0e0e0" stroke-width="1"/>
<line x1="1515.4" y1="923.2" x2="1515.4" y2="929.2" stroke="#e0e0e0" stroke-width="1"/>
<path d="M1273.2,906.8 L1307.8,890.5 L1342.4,882.3 L1377.0,874.1 L1411.6,875.7 L1446.2,857.7 L1480.8,841.3 L1515.4,806.9" fill="none" stroke="#1f94f2" stroke-width="4" stroke-linejoin="round"/>
<rect x="1261.2" y="898.3" width="24" height="14.5" rx="2" fill="#1f94f2" stroke="#ffffff" stroke-width="0.8"/>
<text x="1273.2" y="910.3" text-anchor="middle" class="dl">30</text>
<text x="1273.2" y="948.3" text-anchor="middle" class="cx">2015</text>
<rect x="1295.8" y="882.0" width="24" height="14.5" rx="2" fill="#1f94f2" stroke="#ffffff" stroke-width="0.8"/>
<text x="1307.8" y="894.0" text-anchor="middle" class="dl">40</text>
<text x="1307.8" y="948.3" text-anchor="middle" class="cx">2016</text>
<rect x="1330.4" y="873.8" width="24" height="14.5" rx="2" fill="#1f94f2" stroke="#ffffff" stroke-width="0.8"/>
<text x="1342.4" y="885.8" text-anchor="middle" class="dl">45</text>
<text x="1342.4" y="948.3" text-anchor="middle" class="cx">2017</text>
<rect x="1365.0" y="865.6" width="24" height="14.5" rx="2" fill="#1f94f2" stroke="#ffffff" stroke-width="0.8"/>
<text x="1377.0" y="877.6" text-anchor="middle" class="dl">50</text>
<text x="1377.0" y="948.3" text-anchor="middle" class="cx">2018</text>
<rect x="1399.6" y="867.2" width="24" height="14.5" rx="2" fill="#1f94f2" stroke="#ffffff" stroke-width="0.8"/>
<text x="1411.6" y="879.2" text-anchor="middle" class="dl">49</text>
<text x="1411.6" y="948.3" text-anchor="middle" class="cx">2019</text>
<rect x="1434.2" y="849.2" width="24" height="14.5" rx="2" fill="#1f94f2" stroke="#ffffff" stroke-width="0.8"/>
<text x="1446.2" y="861.2" text-anchor="middle" class="dl">60</text>
<text x="1446.2" y="948.3" text-anchor="middle" class="cx">2020</text>
<rect x="1468.8" y="832.8" width="24" height="14.5" rx="2" fill="#1f94f2" stroke="#ffffff" stroke-width="0.8"/>
<text x="1480.8" y="844.8" text-anchor="middle" class="dl">70</text>
<text x="1480.8" y="948.3" text-anchor="middle" class="cx">2021</text>
<rect x="1503.4" y="798.4" width="24" height="14.5" rx="2" fill="#1f94f2" stroke="#ffffff" stroke-width="0.8"/>
<text x="1515.4" y="810.4" text-anchor="middle" class="dl">91</text>
<text x="1515.4" y="948.3" text-anchor="middle" class="cx">2022</text>
<circle cx="1416.4" cy="774.2" r="6.3" fill="none" stroke="#6e8192" stroke-width="1.3"/><path d="M1412.9 774.2 H1419.9 M1416.4 770.7 V777.7" stroke="#6e8192" stroke-width="1.3"/>
<circle cx="1436.4" cy="774.2" r="6.3" fill="none" stroke="#6e8192" stroke-width="1.3"/><path d="M1432.9 774.2 H1439.9" stroke="#6e8192" stroke-width="1.3"/>
<circle cx="1457.3" cy="772.6" r="5" fill="none" stroke="#1a8cf5" stroke-width="1.8"/><path d="M1460.8 776.1 L1465 780.3" stroke="#1a8cf5" stroke-width="2.2" stroke-linecap="round"/><path d="M1454.8 772.6 H1459.8 M1457.3 770.1 V775.1" stroke="#1a8cf5" stroke-width="1.3"/>
<path d="M1476.5 775 L1476.5 768.5 Q1476.5 767.2 1477.7 767.2 Q1478.9 767.2 1478.9 768.5 L1478.9 766.8 Q1478.9 765.5 1480.1 765.5 Q1481.3 765.5 1481.3 766.8 L1481.3 767.5 Q1481.3 766.3 1482.5 766.3 Q1483.7 766.3 1483.7 767.5 L1483.7 769 Q1483.7 767.8 1484.9 767.8 Q1486 767.8 1486 769 L1486 776.5 Q1486 780.8 1482 780.8 L1480 780.8 Q1478 780.8 1476.5 778.8 L1473.8 775.2 Q1473 774 1474 773.4 Q1475 772.9 1476.5 775 Z" fill="#f6f6f6" stroke="#6e8192" stroke-width="1.1"/>
<path d="M1504.5 766.8 L1512.2 774.3 L1510 774.3 L1510 780.8 L1506.2 780.8 L1506.2 776.5 L1502.8 776.5 L1502.8 780.8 L1499 780.8 L1499 774.3 L1496.8 774.3 Z" fill="#6e8192"/>
<line x1="1517.5" y1="770.3" x2="1532.5" y2="770.3" stroke="#6e8192" stroke-width="1.6"/>
<line x1="1517.5" y1="774.6" x2="1532.5" y2="774.6" stroke="#6e8192" stroke-width="1.6"/>
<line x1="1517.5" y1="778.9" x2="1532.5" y2="778.9" stroke="#6e8192" stroke-width="1.6"/>
</svg>
</body></html>
